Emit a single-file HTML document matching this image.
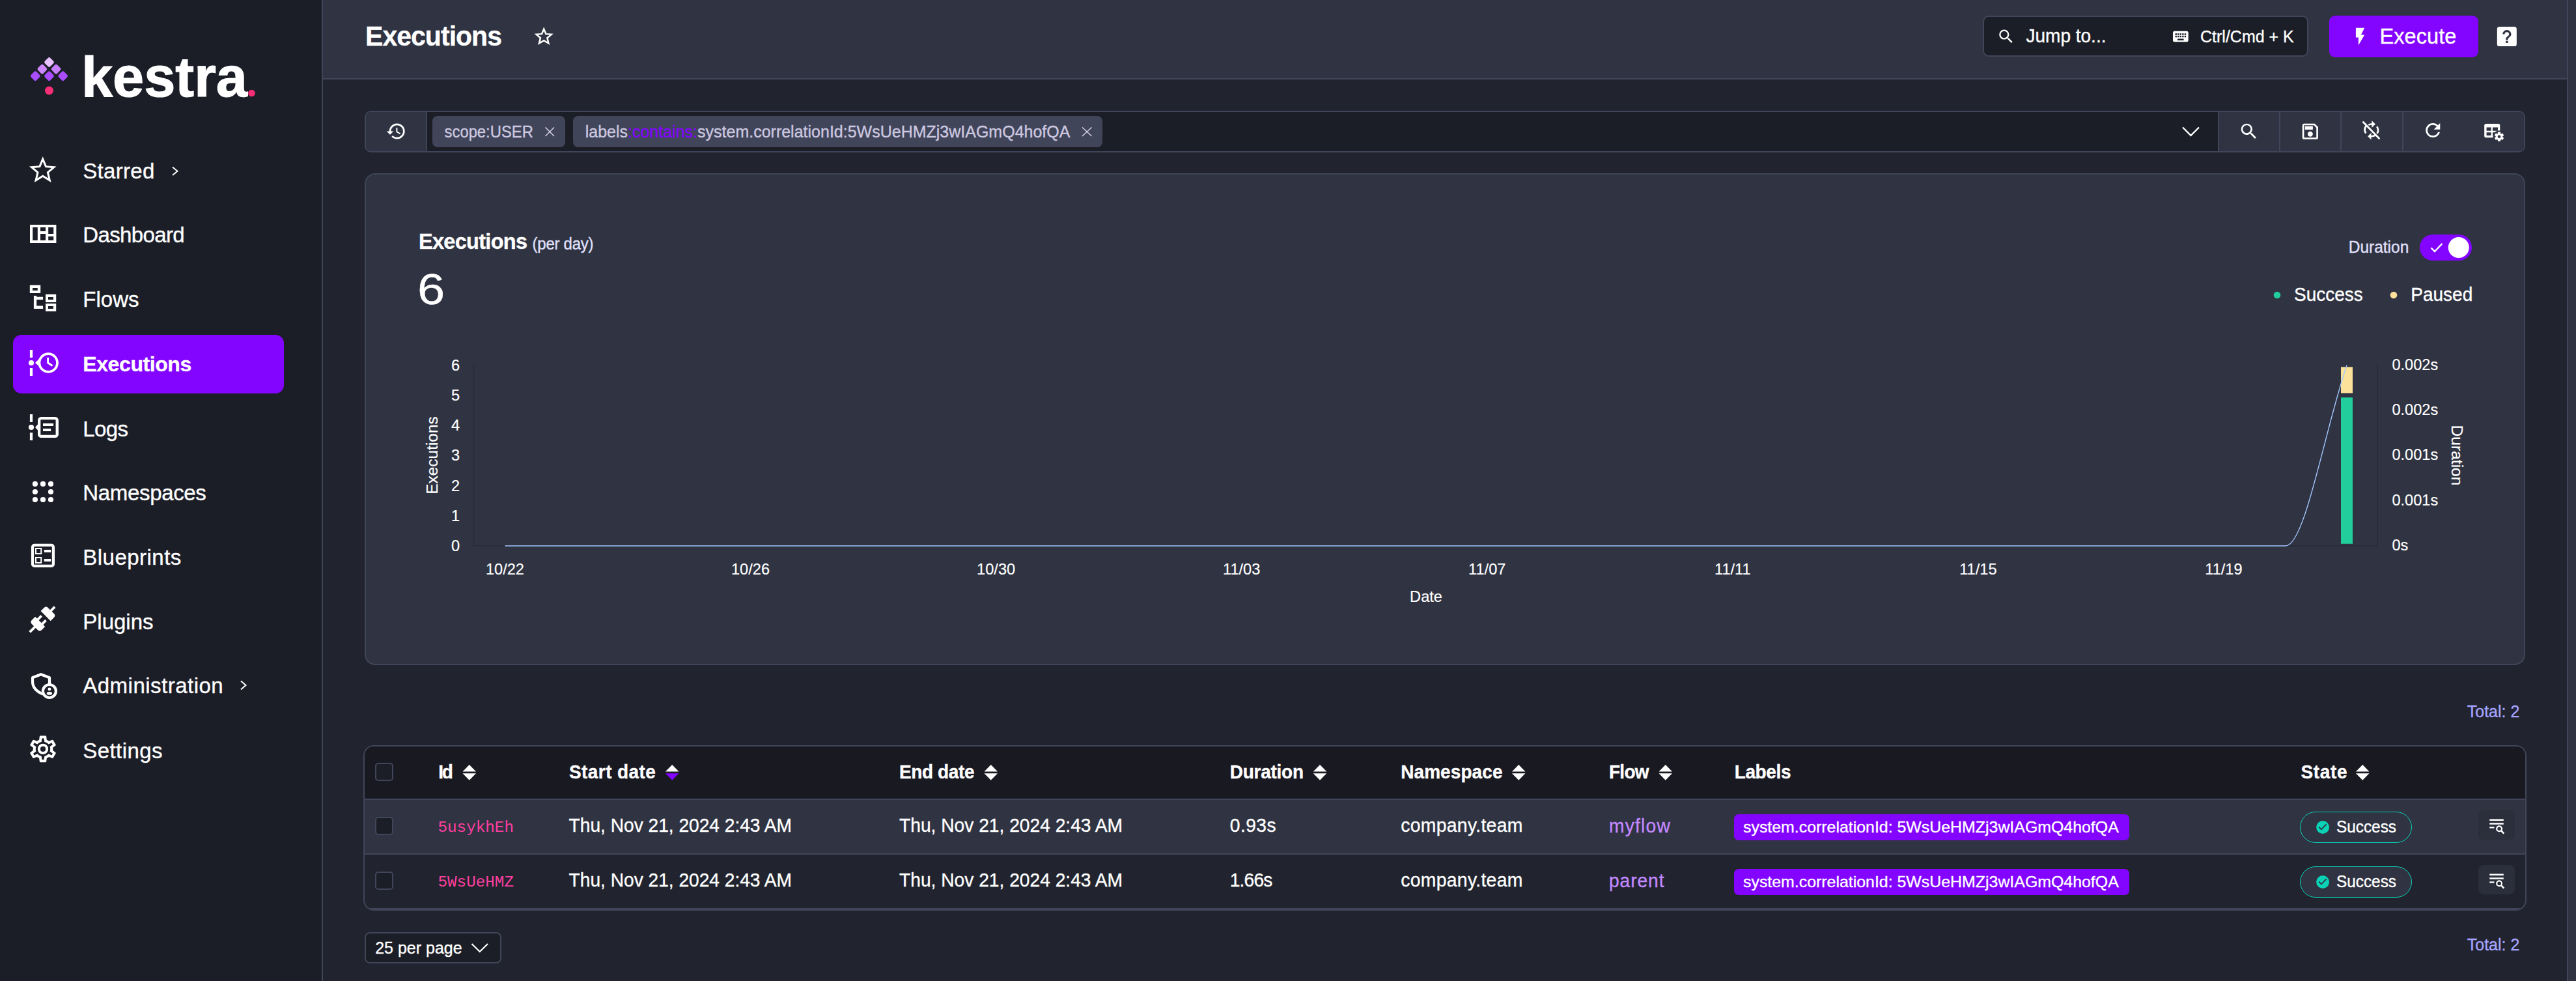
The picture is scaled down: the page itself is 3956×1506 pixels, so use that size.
<!DOCTYPE html>
<html><head><meta charset="utf-8"><style>
html,body{margin:0;padding:0;width:3956px;height:1506px;overflow:hidden;background:#21242e}
.t{position:absolute;white-space:pre;line-height:1;-webkit-text-stroke:0.35px currentColor}
.c{-webkit-text-stroke:0.2px currentColor}
.m{-webkit-text-stroke:0}
svg{overflow:visible}
</style></head><body>
<div style="position:absolute;left:0px;top:0px;width:494px;height:1506px;background:#1c1e27"></div>
<div style="position:absolute;left:494px;top:0px;width:2px;height:1506px;background:#404559"></div>
<div style="position:absolute;left:496px;top:0px;width:3446px;height:120px;background:#2f3342"></div>
<div style="position:absolute;left:496px;top:120px;width:3446px;height:2px;background:#404559"></div>
<div style="position:absolute;left:496px;top:122px;width:3446px;height:1384px;background:#21242e"></div>
<div style="position:absolute;left:3942px;top:0px;width:2px;height:1506px;background:#404559"></div>
<div style="position:absolute;left:3944px;top:0px;width:12px;height:1506px;background:#2f3342"></div>
<svg style="position:absolute;left:0px;top:0px;" width="494" height="200" viewBox="0 0 494 200"><rect x="69.6" y="89.6" width="11.8" height="11.8" rx="2.5" fill="#e9c1ff" transform="rotate(45 75.5 95.5)"/><rect x="59.00000000000001" y="100.19999999999999" width="11.8" height="11.8" rx="2.5" fill="#cd87ff" transform="rotate(45 64.9 106.1)"/><rect x="80.19999999999999" y="100.19999999999999" width="11.8" height="11.8" rx="2.5" fill="#c77dff" transform="rotate(45 86.1 106.1)"/><rect x="48.4" y="110.8" width="11.8" height="11.8" rx="2.5" fill="#a94dff" transform="rotate(45 54.3 116.7)"/><rect x="69.6" y="110.8" width="11.8" height="11.8" rx="2.5" fill="#a94dff" transform="rotate(45 75.5 116.7)"/><rect x="90.8" y="110.8" width="11.8" height="11.8" rx="2.5" fill="#a94dff" transform="rotate(45 96.7 116.7)"/><circle cx="75.5" cy="139" r="6.5" fill="#f62e76"/></svg>
<svg style="position:absolute;left:0;top:0" width="494" height="200" viewBox="0 0 494 200"><text x="125" y="147.5" font-family="Liberation Sans" font-weight="bold" font-size="88" fill="#fff" stroke="#fff" stroke-width="1.2" textLength="255" lengthAdjust="spacingAndGlyphs">kestra</text><circle cx="386.5" cy="143" r="5.3" fill="#f62e76"/></svg>
<div style="position:absolute;left:20px;top:514px;width:416px;height:90px;background:#8405ff;border-radius:13px"></div>
<div class="t " style="left:127.30px;top:245.95px;font:normal 33px/1 'Liberation Sans',sans-serif;color:#fff;letter-spacing:0.293px;">Starred</div>
<div class="t " style="left:127.30px;top:343.95px;font:normal 33px/1 'Liberation Sans',sans-serif;color:#fff;letter-spacing:-0.634px;">Dashboard</div>
<div class="t " style="left:127.30px;top:442.95px;font:normal 33px/1 'Liberation Sans',sans-serif;color:#fff;">Flows</div>
<div class="t " style="left:127.30px;top:542.80px;font:bold 32px/1 'Liberation Sans',sans-serif;color:#fff;letter-spacing:-0.413px;">Executions</div>
<div class="t " style="left:127.30px;top:641.95px;font:normal 33px/1 'Liberation Sans',sans-serif;color:#fff;letter-spacing:-0.637px;">Logs</div>
<div class="t " style="left:127.30px;top:739.95px;font:normal 33px/1 'Liberation Sans',sans-serif;color:#fff;letter-spacing:-0.339px;">Namespaces</div>
<div class="t " style="left:127.30px;top:838.95px;font:normal 33px/1 'Liberation Sans',sans-serif;color:#fff;letter-spacing:0.479px;">Blueprints</div>
<div class="t " style="left:127.30px;top:937.95px;font:normal 33px/1 'Liberation Sans',sans-serif;color:#fff;letter-spacing:-0.007px;">Plugins</div>
<div class="t " style="left:127.30px;top:1036.45px;font:normal 33px/1 'Liberation Sans',sans-serif;color:#fff;letter-spacing:0.48px;">Administration</div>
<div class="t " style="left:127.30px;top:1135.55px;font:normal 33px/1 'Liberation Sans',sans-serif;color:#fff;letter-spacing:0.415px;">Settings</div>
<svg style="position:absolute;left:0px;top:0px;" width="494" height="1506" viewBox="0 0 494 1506"><polyline points="265,256.5 272.5,262.75 265,269" fill="none" stroke="#fff" stroke-width="2"/><polyline points="370,1045.5 377.5,1052.0 370,1058.5" fill="none" stroke="#fff" stroke-width="2"/><polygon points="65.70,244.20 70.46,255.65 82.82,256.64 73.40,264.70 76.28,276.76 65.70,270.30 55.12,276.76 58.00,264.70 48.58,256.64 60.94,255.65" fill="none" stroke="#fff" stroke-width="3" stroke-miterlimit="3"/><path fill="#fff" fill-rule="evenodd" d="M46,345H86.4V373H46Z M50.2,349V369H57.8V349Z M62,349V355H70V349Z M62,359V369H70V359Z M74.2,349V359H82.2V349Z M74.2,363V369H82.2V363Z"/><path fill="#fff" fill-rule="evenodd" d="M45.8,437.8H62.2V450H45.8Z M50,442V446H57.8V442Z  M70,451.8H86.2V464H70Z M74,456V460H81.9V456Z M70,466.1H86.2V478H70Z M74,470V474H81.9V470Z M51.9,453.9H56.2V455.7H66.1V460H56.2V469.5H66.1V474H51.9Z"/><rect x="45.9" y="537" width="4.2" height="12" fill="#fff"/><rect x="45.9" y="565" width="4.2" height="12" fill="#fff"/><circle cx="48" cy="557" r="4.1" fill="#fff"/><path fill="#fff" d="M54,557L60.5,550.5L61.5,563.5Z"/><circle cx="74.2" cy="557" r="13.8" fill="none" stroke="#fff" stroke-width="3.8"/><path d="M73.6,549V557L80.5,561.5" fill="none" stroke="#fff" stroke-width="2.8"/><rect x="45.9" y="636" width="4.2" height="12" fill="#fff"/><rect x="45.9" y="664.2" width="4.2" height="11.8" fill="#fff"/><circle cx="48" cy="656" r="4.1" fill="#fff"/><path fill="#fff" d="M54,656L59,650.5L59,661.5Z"/><rect x="60.15" y="642.15" width="27.6" height="27.8" rx="3" fill="none" stroke="#fff" stroke-width="4.3"/><rect x="66" y="650" width="16" height="4" fill="#fff"/><rect x="66" y="658" width="12.1" height="4" fill="#fff"/><circle cx="53.9" cy="742.9" r="4.1" fill="#fff"/><circle cx="53.9" cy="755" r="4.1" fill="#fff"/><circle cx="53.9" cy="767" r="4.1" fill="#fff"/><circle cx="66" cy="742.9" r="4.1" fill="#fff"/><circle cx="66" cy="767" r="4.1" fill="#fff"/><circle cx="78" cy="742.9" r="4.1" fill="#fff"/><circle cx="78" cy="755" r="4.1" fill="#fff"/><circle cx="78" cy="767" r="4.1" fill="#fff"/><rect x="50" y="836.9" width="31.9" height="32" rx="3" fill="none" stroke="#fff" stroke-width="4.2"/><rect x="55" y="842" width="8.2" height="8" fill="none" stroke="#fff" stroke-width="2"/><rect x="55" y="856" width="8.2" height="8" fill="none" stroke="#fff" stroke-width="2"/><rect x="67.8" y="844" width="10.3" height="4" fill="#fff"/><rect x="67.8" y="858" width="10.3" height="4" fill="#fff"/><g transform="translate(41.6,927.8) scale(1.94)"><path fill="#fff" d="M21.4 7.5C22.2 8.3 22.2 9.6 21.4 10.3L18.6 13.1L10.8 5.3L13.6 2.5C14.4 1.7 15.7 1.7 16.4 2.5L18.2 4.3L21.2 1.3L22.6 2.7L19.6 5.7L21.4 7.5M15.6 13.3L14.2 11.9L11.4 14.7L9.3 12.6L12.1 9.8L10.7 8.4L7.9 11.2L6.4 9.8L3.6 12.6C2.8 13.4 2.8 14.7 3.6 15.4L5.4 17.2L1.4 21.2L2.8 22.6L6.8 18.6L8.6 20.4C9.4 21.2 10.7 21.2 11.4 20.4L14.2 17.6L12.8 16.2L15.6 13.3Z"/></g><path fill="none" stroke="#fff" stroke-width="4.2" stroke-linejoin="round" d="M65.8,1065.5C57,1062 50,1056 50,1046V1040.2L62.9,1035.2L76,1040.2V1050"/><circle cx="75.9" cy="1061" r="10" fill="none" stroke="#fff" stroke-width="4.2"/><circle cx="75.9" cy="1058" r="2.4" fill="#fff"/><ellipse cx="75.9" cy="1064.4" rx="4.2" ry="2.3" fill="#fff"/><g transform="translate(41.5,1125.4) scale(2.04)"><path fill="#fff" d="M12,8A4,4 0 0,1 16,12A4,4 0 0,1 12,16A4,4 0 0,1 8,12A4,4 0 0,1 12,8M12,10A2,2 0 0,0 10,12A2,2 0 0,0 12,14A2,2 0 0,0 14,12A2,2 0 0,0 12,10M10,22C9.75,22 9.54,21.82 9.5,21.58L9.13,18.93C8.5,18.68 7.96,18.34 7.44,17.94L4.95,18.95C4.73,19.03 4.46,18.95 4.34,18.73L2.34,15.27C2.21,15.05 2.27,14.78 2.46,14.63L4.57,12.97L4.5,12L4.57,11L2.46,9.37C2.27,9.22 2.21,8.95 2.34,8.73L4.34,5.27C4.46,5.05 4.73,4.96 4.95,5.05L7.44,6.05C7.96,5.66 8.5,5.32 9.13,5.07L9.5,2.42C9.54,2.18 9.75,2 10,2H14C14.25,2 14.46,2.18 14.5,2.42L14.87,5.07C15.5,5.32 16.04,5.66 16.56,6.05L19.05,5.05C19.27,4.96 19.54,5.05 19.66,5.27L21.66,8.73C21.79,8.95 21.73,9.22 21.54,9.37L19.43,11L19.5,12L19.43,13L21.54,14.63C21.73,14.78 21.79,15.05 21.66,15.27L19.66,18.73C19.54,18.95 19.27,19.04 19.05,18.95L16.56,17.95C16.04,18.34 15.5,18.68 14.87,18.93L14.5,21.58C14.46,21.82 14.25,22 14,22H10M11.25,4L10.88,6.61C9.68,6.86 8.62,7.5 7.85,8.39L5.44,7.35L4.69,8.65L6.8,10.2C6.4,11.37 6.4,12.64 6.8,13.8L4.68,15.36L5.43,16.66L7.86,15.62C8.63,16.5 9.68,17.14 10.87,17.38L11.24,20H12.76L13.13,17.39C14.32,17.14 15.37,16.5 16.14,15.62L18.57,16.66L19.32,15.36L17.2,13.81C17.6,12.64 17.6,11.37 17.2,10.2L19.31,8.65L18.56,7.35L16.15,8.39C15.38,7.5 14.32,6.86 13.12,6.62L12.75,4H11.25Z"/></g></svg>
<div class="t " style="left:561.00px;top:35.95px;font:bold 41px/1 'Liberation Sans',sans-serif;color:#fff;letter-spacing:-0.971px;transform:scaleY(1.03);transform-origin:0 34.85px;">Executions</div>
<svg style="position:absolute;left:0px;top:0px;" width="900" height="120" viewBox="0 0 900 120"><polygon points="835.20,44.40 838.43,52.15 846.80,52.83 840.43,58.30 842.37,66.47 835.20,62.10 828.03,66.47 829.97,58.30 823.60,52.83 831.97,52.15" fill="none" stroke="#fff" stroke-width="2.5" stroke-miterlimit="3"/></svg>
<div style="position:absolute;left:3045px;top:24px;width:500px;height:63px;background:#1c1e27;border:2px solid #404559;border-radius:9px;box-sizing:border-box"></div>
<div style="position:absolute;left:3577px;top:24px;width:229px;height:64px;background:#8405ff;border-radius:9px"></div>
<svg style="position:absolute;left:3000px;top:0px;" width="956" height="120" viewBox="3000 0 956 120"><g transform="translate(3066.7,41.9) scale(1.17)"><path fill="#fff" d="M9.5,3A6.5,6.5 0 0,1 16,9.5C16,11.11 15.41,12.59 14.44,13.73L14.71,14H15.5L20.5,19L19,20.5L14,15.5V14.71L13.73,14.44C12.59,15.41 11.11,16 9.5,16A6.5,6.5 0 0,1 3,9.5A6.5,6.5 0 0,1 9.5,3M9.5,5C7,5 5,7 5,9.5C5,12 7,14 9.5,14C12,14 14,12 14,9.5C14,7 12,5 9.5,5Z"/></g><g transform="translate(3334.6,41.8) scale(1.185)"><path fill="#fff" d="M19,10H17V8H19M19,13H17V11H19M16,10H14V8H16M16,13H14V11H16M16,17H8V15H16M7,10H5V8H7M7,13H5V11H7M8,11H10V13H8M8,8H10V10H8M11,11H13V13H11M11,8H13V10H11M20,5H4C2.89,5 2,5.89 2,7V17A2,2 0 0,0 4,19H20A2,2 0 0,0 22,17V7C22,5.89 21.1,5 20,5Z"/></g><g transform="translate(3608.6,40.2) scale(1.33)"><path fill="#fff" d="M7,2V13H10V22L17,10H13L17,2H7Z"/></g><g transform="translate(3829.8,35.9) scale(1.67)"><path fill="#fff" fill-rule="evenodd" d="M11,18H13V16H11V18M19,3H5C3.89,3 3,3.89 3,5V19A2,2 0 0,0 5,21H19A2,2 0 0,0 21,19V5C21,3.89 20.1,3 19,3M12,6A4,4 0 0,0 8,10H10A2,2 0 0,1 12,8A2,2 0 0,1 14,10C14,12 11,11.75 11,15H13C13,12.75 16,12.5 16,10A4,4 0 0,0 12,6Z"/></g></svg>
<div class="t " style="left:3111.50px;top:42.10px;font:normal 28px/1 'Liberation Sans',sans-serif;color:#fff;transform:scaleY(1.05);transform-origin:0 23.80px;">Jump to...</div>
<div class="t " style="left:3379.00px;top:43.95px;font:normal 25px/1 'Liberation Sans',sans-serif;color:#fff;transform:scaleY(1.05);transform-origin:0 21.25px;">Ctrl/Cmd + K</div>
<div class="t " style="left:3654.50px;top:39.88px;font:normal 32.5px/1 'Liberation Sans',sans-serif;color:#fff;letter-spacing:0.085px;transform:scaleY(1.05);transform-origin:0 27.62px;">Execute</div>
<div style="position:absolute;left:560px;top:170px;width:3318px;height:64px;box-sizing:border-box;border:2px solid #404559;border-radius:10px;background:#1c1e27;overflow:hidden"><div style="position:absolute;left:0;top:0;width:92px;height:60px;background:#2f3342"></div><div style="position:absolute;left:92px;top:0;width:2px;height:60px;background:#404559"></div><div style="position:absolute;left:2846px;top:0;width:470px;height:60px;background:#2f3342"></div><div style="position:absolute;left:2844px;top:0;width:2px;height:60px;background:#404559"></div><div style="position:absolute;left:2938px;top:0;width:2px;height:60px;background:#404559"></div><div style="position:absolute;left:3032px;top:0;width:2px;height:60px;background:#404559"></div><div style="position:absolute;left:3127px;top:0;width:2px;height:60px;background:#404559"></div></div>
<div style="position:absolute;left:664px;top:178px;width:204px;height:48px;background:#404559;border-radius:8px"></div>
<div style="position:absolute;left:880px;top:178px;width:813px;height:48px;background:#404559;border-radius:8px"></div>
<div class="t " style="left:682.60px;top:191.17px;font:normal 23.8px/1 'Liberation Sans',sans-serif;color:#cdc8e0;transform:scaleY(1.05);transform-origin:0 20.23px;">scope:USER</div>
<div class="t" style="left:898.70px;top:190.15px;font:25px/1 'Liberation Sans',sans-serif;color:#cdc8e0">labels<span style="color:#8405ff">:contains:</span>system.correlationId:5WsUeHMZj3wIAGmQ4hofQA</div>
<svg style="position:absolute;left:0px;top:160px;" width="3956" height="80" viewBox="0 160 3956 80"><path d="M837.5,195.5L851,209M851,195.5L837.5,209" stroke="#cdc8e0" stroke-width="1.7" fill="none"/><path d="M1662,195.5L1676.5,209M1676.5,195.5L1662,209" stroke="#cdc8e0" stroke-width="1.7" fill="none"/><g transform="translate(592.4,185.5) scale(1.33)"><path fill="#fff" d="M13.5,8H12V13L16.28,15.54L17,14.33L13.5,12.25V8M13,3A9,9 0 0,0 4,12H1L4.96,16.03L9,12H6A7,7 0 0,1 13,5A7,7 0 0,1 20,12A7,7 0 0,1 13,19C11.07,19 9.32,18.21 8.06,16.94L6.64,18.36C8.27,20 10.5,21 13,21A9,9 0 0,0 22,12A9,9 0 0,0 13,3"/></g><polyline points="3352,195.5 3364.5,208 3377,195.5" fill="none" stroke="#fff" stroke-width="2.4"/><g transform="translate(3437.7,185.7) scale(1.33)"><path fill="#fff" d="M9.5,3A6.5,6.5 0 0,1 16,9.5C16,11.11 15.41,12.59 14.44,13.73L14.71,14H15.5L20.5,19L19,20.5L14,15.5V14.71L13.73,14.44C12.59,15.41 11.11,16 9.5,16A6.5,6.5 0 0,1 3,9.5A6.5,6.5 0 0,1 9.5,3M9.5,5C7,5 5,7 5,9.5C5,12 7,14 9.5,14C12,14 14,12 14,9.5C14,7 12,5 9.5,5Z"/></g><g transform="translate(3531.7,185.6) scale(1.345)"><path fill="#fff" d="M17 3H5C3.89 3 3 3.9 3 5V19C3 20.1 3.89 21 5 21H19C20.1 21 21 20.1 21 19V7L17 3M19 19H5V5H16.17L19 7.83V19M12 12C10.34 12 9 13.34 9 15S10.34 18 12 18 15 16.66 15 15 13.66 12 12 12M6 6H15V10H6V6Z"/></g><path d="M3629.3,187.6L3653.6,212.6" stroke="#fff" stroke-width="2.8" stroke-linecap="round"/><polygon points="3642.3,185.3 3648,190.6 3642.3,195.9" fill="#fff"/><path d="M3637.3,192.2Q3639,190.4 3643,190.5" stroke="#fff" stroke-width="2.6" fill="none"/><path d="M3633.6,193.2A10.5,10.5 0 0,0 3633.2,204.6" stroke="#fff" stroke-width="2.8" fill="none"/><path d="M3650.3,194.3A10.5,10.5 0 0,1 3650.6,205" stroke="#fff" stroke-width="2.8" fill="none"/><polygon points="3641.5,204.1 3636.2,209.3 3641.5,214.5" fill="#fff"/><path d="M3641,209.3Q3645.5,209.3 3648.5,207.4" stroke="#fff" stroke-width="2.6" fill="none"/><g transform="translate(3719.7,183.5) scale(1.38)"><path fill="#fff" d="M17.65,6.35C16.2,4.9 14.21,4 12,4A8,8 0 0,0 4,12A8,8 0 0,0 12,20C15.73,20 18.84,17.45 19.73,14H17.65C16.83,16.33 14.61,18 12,18A6,6 0 0,1 6,12A6,6 0 0,1 12,6C13.66,6 15.14,6.69 16.22,7.78L13,11H20V4L17.65,6.35Z"/></g><path fill="#fff" fill-rule="evenodd" d="M3818,190H3836.5A2.8,2.8 0 0,1 3839.3,192.8V208.4A2.8,2.8 0 0,1 3836.5,211.2H3818A2.8,2.8 0 0,1 3815.2,208.4V192.8A2.8,2.8 0 0,1 3818,190Z M3818.6,195.6V200.8H3825.6V195.6Z M3828,195.6V200.8H3836V195.6Z M3818.6,203.2V208H3825.6V203.2Z M3828,203.2V208H3836V203.2Z"/><circle cx="3838" cy="209.8" r="9.5" fill="#2f3342"/><g transform="translate(3838,209.8)"><rect x="-2.1" y="-7.2" width="4.2" height="14.4" rx="0.8" fill="#fff" transform="rotate(0)"/><rect x="-2.1" y="-7.2" width="4.2" height="14.4" rx="0.8" fill="#fff" transform="rotate(60)"/><rect x="-2.1" y="-7.2" width="4.2" height="14.4" rx="0.8" fill="#fff" transform="rotate(120)"/><circle r="5.4" fill="#fff"/><circle r="2.3" fill="#2f3342"/></g></svg>
<div style="position:absolute;left:560px;top:266px;width:3318px;height:755px;background:#2f3342;border:2px solid #404559;border-radius:16px;box-sizing:border-box"></div>
<div class="t " style="left:643.00px;top:355.38px;font:bold 32.5px/1 'Liberation Sans',sans-serif;color:#fff;letter-spacing:-0.71px;transform:scaleY(1.05);transform-origin:0 27.62px;">Executions</div>
<div class="t " style="left:817.60px;top:362.60px;font:normal 24px/1 'Liberation Sans',sans-serif;color:#e0e0fc;letter-spacing:-0.275px;transform:scaleY(1.05);transform-origin:0 20.40px;">(per day)</div>
<div class="t " style="left:640.50px;top:410.50px;font:normal 66px/1 'Liberation Sans',sans-serif;color:#fff;transform:scaleX(1.15);transform-origin:0 0;">6</div>
<div class="t " style="left:3606.70px;top:368.07px;font:normal 24.5px/1 'Liberation Sans',sans-serif;color:#e0e0fc;transform:scaleY(1.05);transform-origin:0 20.82px;">Duration</div>
<div style="position:absolute;left:3716px;top:360px;width:80px;height:40px;background:#8405ff;border-radius:20px"></div>
<svg style="position:absolute;left:560px;top:266px;" width="3318" height="755" viewBox="560 266 3318 755"><circle cx="3775.8" cy="380" r="16" fill="#fff"/><polyline points="3733.5,380.5 3739,386 3750.5,374" fill="none" stroke="#fff" stroke-width="2.4"/><circle cx="3497" cy="453" r="5.3" fill="#21ce9c"/><circle cx="3676" cy="453" r="5.3" fill="#fbe199"/><path d="M727.5,559.5V838M3651,559.5V838M727.5,838H3651" stroke="#292c39" stroke-width="2" fill="none"/><rect x="3595" y="610.2" width="18" height="224.6" fill="#21ce9c"/><rect x="3595" y="563.4" width="18" height="40.1" fill="#fbe199"/><path d="M775.5,838H3510C3540,838 3570,660 3604,560.7" fill="none" stroke="#a4c8ff" stroke-width="1.4"/></svg>
<div class="t " style="left:3523.00px;top:439.00px;font:normal 28px/1 'Liberation Sans',sans-serif;color:#fff;transform:scaleY(1.05);transform-origin:0 23.80px;">Success</div>
<div class="t " style="left:3702.30px;top:439.00px;font:normal 28px/1 'Liberation Sans',sans-serif;color:#fff;transform:scaleY(1.05);transform-origin:0 23.80px;">Paused</div>
<div class="t c" style="left:692.90px;top:827.14px;font:normal 23.6px/1 'Liberation Sans',sans-serif;color:#fff;">0</div>
<div class="t c" style="left:692.90px;top:780.89px;font:normal 23.6px/1 'Liberation Sans',sans-serif;color:#fff;">1</div>
<div class="t c" style="left:692.90px;top:734.64px;font:normal 23.6px/1 'Liberation Sans',sans-serif;color:#fff;">2</div>
<div class="t c" style="left:692.90px;top:688.39px;font:normal 23.6px/1 'Liberation Sans',sans-serif;color:#fff;">3</div>
<div class="t c" style="left:692.90px;top:642.14px;font:normal 23.6px/1 'Liberation Sans',sans-serif;color:#fff;">4</div>
<div class="t c" style="left:692.90px;top:595.89px;font:normal 23.6px/1 'Liberation Sans',sans-serif;color:#fff;">5</div>
<div class="t c" style="left:692.90px;top:549.64px;font:normal 23.6px/1 'Liberation Sans',sans-serif;color:#fff;">6</div>
<div class="t c" style="left:3673.40px;top:825.84px;font:normal 23.6px/1 'Liberation Sans',sans-serif;color:#fff;">0s</div>
<div class="t c" style="left:3673.40px;top:756.59px;font:normal 23.6px/1 'Liberation Sans',sans-serif;color:#fff;">0.001s</div>
<div class="t c" style="left:3673.40px;top:687.34px;font:normal 23.6px/1 'Liberation Sans',sans-serif;color:#fff;">0.001s</div>
<div class="t c" style="left:3673.40px;top:618.09px;font:normal 23.6px/1 'Liberation Sans',sans-serif;color:#fff;">0.002s</div>
<div class="t c" style="left:3673.40px;top:548.84px;font:normal 23.6px/1 'Liberation Sans',sans-serif;color:#fff;">0.002s</div>
<div class="t c" style="left:745.94px;top:862.64px;font:normal 23.6px/1 'Liberation Sans',sans-serif;color:#fff;">10/22</div>
<div class="t c" style="left:1123.01px;top:862.64px;font:normal 23.6px/1 'Liberation Sans',sans-serif;color:#fff;">10/26</div>
<div class="t c" style="left:1500.08px;top:862.64px;font:normal 23.6px/1 'Liberation Sans',sans-serif;color:#fff;">10/30</div>
<div class="t c" style="left:1878.04px;top:862.64px;font:normal 23.6px/1 'Liberation Sans',sans-serif;color:#fff;">11/03</div>
<div class="t c" style="left:2255.11px;top:862.64px;font:normal 23.6px/1 'Liberation Sans',sans-serif;color:#fff;">11/07</div>
<div class="t c" style="left:2633.06px;top:862.64px;font:normal 23.6px/1 'Liberation Sans',sans-serif;color:#fff;">11/11</div>
<div class="t c" style="left:3009.25px;top:862.64px;font:normal 23.6px/1 'Liberation Sans',sans-serif;color:#fff;">11/15</div>
<div class="t c" style="left:3386.32px;top:862.64px;font:normal 23.6px/1 'Liberation Sans',sans-serif;color:#fff;">11/19</div>
<div class="t c" style="left:2165.10px;top:905.14px;font:normal 23.6px/1 'Liberation Sans',sans-serif;color:#fff;">Date</div>
<div class="t c" style="left:663.7px;top:698.7px;font:24.4px 'Liberation Sans',sans-serif;color:#fff;transform:translate(-50%,-50%) rotate(-90deg);line-height:1">Executions</div>
<div class="t c" style="left:3772.5px;top:699px;font:24.6px 'Liberation Sans',sans-serif;color:#fff;transform:translate(-50%,-50%) rotate(90deg);line-height:1">Duration</div>
<div class="t " style="left:3788.78px;top:1080.05px;font:normal 25px/1 'Liberation Sans',sans-serif;color:#a6a3ff;transform:scaleY(1.05);transform-origin:0 21.25px;">Total: 2</div>
<div class="t " style="left:3788.78px;top:1437.95px;font:normal 25px/1 'Liberation Sans',sans-serif;color:#a6a3ff;transform:scaleY(1.05);transform-origin:0 21.25px;">Total: 2</div>
<div style="position:absolute;left:558px;top:1144px;width:3322px;height:254px;box-sizing:border-box;border:2px solid #404559;border-radius:16px;overflow:hidden;background:#21242e"><div style="position:absolute;left:0;top:0;width:3318px;height:80px;background:#191922"></div><div style="position:absolute;left:0;top:80px;width:3318px;height:2px;background:#404559"></div><div style="position:absolute;left:0;top:82px;width:3318px;height:82px;background:#2f3342"></div><div style="position:absolute;left:0;top:164px;width:3318px;height:2px;background:#404559"></div><div style="position:absolute;left:0;top:248px;width:3318px;height:2px;background:#404559"></div></div>
<div style="position:absolute;left:576px;top:1171px;width:28px;height:28px;background:#1c1e27;border:2px solid #404559;border-radius:5px;box-sizing:border-box"></div>
<div style="position:absolute;left:576px;top:1253.5px;width:28px;height:28.0px;background:#1c1e27;border:2px solid #404559;border-radius:5px;box-sizing:border-box"></div>
<div style="position:absolute;left:576px;top:1337.5px;width:28px;height:28.0px;background:#1c1e27;border:2px solid #404559;border-radius:5px;box-sizing:border-box"></div>
<div class="t " style="left:673.20px;top:1171.50px;font:bold 28px/1 'Liberation Sans',sans-serif;color:#fff;letter-spacing:-2.12px;transform:scaleY(1.05);transform-origin:0 23.80px;">Id</div>
<div class="t " style="left:874.00px;top:1171.50px;font:bold 28px/1 'Liberation Sans',sans-serif;color:#fff;letter-spacing:0.42px;transform:scaleY(1.05);transform-origin:0 23.80px;">Start date</div>
<div class="t " style="left:1381.00px;top:1171.50px;font:bold 28px/1 'Liberation Sans',sans-serif;color:#fff;letter-spacing:-0.386px;transform:scaleY(1.05);transform-origin:0 23.80px;">End date</div>
<div class="t " style="left:1888.80px;top:1171.50px;font:bold 28px/1 'Liberation Sans',sans-serif;color:#fff;letter-spacing:-0.269px;transform:scaleY(1.05);transform-origin:0 23.80px;">Duration</div>
<div class="t " style="left:2151.20px;top:1171.50px;font:bold 28px/1 'Liberation Sans',sans-serif;color:#fff;letter-spacing:0.078px;transform:scaleY(1.05);transform-origin:0 23.80px;">Namespace</div>
<div class="t " style="left:2471.00px;top:1171.50px;font:bold 28px/1 'Liberation Sans',sans-serif;color:#fff;letter-spacing:-0.747px;transform:scaleY(1.05);transform-origin:0 23.80px;">Flow</div>
<div class="t " style="left:2663.70px;top:1171.50px;font:bold 28px/1 'Liberation Sans',sans-serif;color:#fff;letter-spacing:-0.372px;transform:scaleY(1.05);transform-origin:0 23.80px;">Labels</div>
<div class="t " style="left:3533.50px;top:1171.50px;font:bold 28px/1 'Liberation Sans',sans-serif;color:#fff;letter-spacing:0.66px;transform:scaleY(1.05);transform-origin:0 23.80px;">State</div>
<svg style="position:absolute;left:0px;top:1140px;" width="3956" height="70" viewBox="0 1140 3956 70"><path d="M710.5,1184.5L720.75,1174L731.0,1184.5Z" fill="#fff"/><path d="M710.5,1187.2L720.75,1197.7L731.0,1187.2Z" fill="#fff"/><path d="M1022,1184.5L1032.25,1174L1042.5,1184.5Z" fill="#fff"/><path d="M1022,1187.2L1032.25,1197.7L1042.5,1187.2Z" fill="#8405ff"/><path d="M1511.5,1184.5L1521.75,1174L1532.0,1184.5Z" fill="#fff"/><path d="M1511.5,1187.2L1521.75,1197.7L1532.0,1187.2Z" fill="#fff"/><path d="M2016.8,1184.5L2027.05,1174L2037.3,1184.5Z" fill="#fff"/><path d="M2016.8,1187.2L2027.05,1197.7L2037.3,1187.2Z" fill="#fff"/><path d="M2322,1184.5L2332.25,1174L2342.5,1184.5Z" fill="#fff"/><path d="M2322,1187.2L2332.25,1197.7L2342.5,1187.2Z" fill="#fff"/><path d="M2547.5,1184.5L2557.75,1174L2568.0,1184.5Z" fill="#fff"/><path d="M2547.5,1187.2L2557.75,1197.7L2568.0,1187.2Z" fill="#fff"/><path d="M3618,1184.5L3628.25,1174L3638.5,1184.5Z" fill="#fff"/><path d="M3618,1187.2L3628.25,1197.7L3638.5,1187.2Z" fill="#fff"/></svg>
<div class="t m" style="left:672.40px;top:1258.73px;font:normal 24.3px/1 'Liberation Mono',monospace;color:#ff3ea0;">5usykhEh</div>
<div class="t " style="left:873.60px;top:1253.23px;font:normal 28.2px/1 'Liberation Sans',sans-serif;color:#fff;letter-spacing:-0.031px;transform:scaleY(1.05);transform-origin:0 23.97px;">Thu, Nov 21, 2024 2:43 AM</div>
<div class="t " style="left:1381.00px;top:1253.23px;font:normal 28.2px/1 'Liberation Sans',sans-serif;color:#fff;letter-spacing:-0.006px;transform:scaleY(1.05);transform-origin:0 23.97px;">Thu, Nov 21, 2024 2:43 AM</div>
<div class="t " style="left:1888.80px;top:1253.23px;font:normal 28.2px/1 'Liberation Sans',sans-serif;color:#fff;letter-spacing:0.463px;transform:scaleY(1.05);transform-origin:0 23.97px;">0.93s</div>
<div class="t " style="left:2151.20px;top:1253.06px;font:normal 28.4px/1 'Liberation Sans',sans-serif;color:#fff;letter-spacing:0.284px;transform:scaleY(1.05);transform-origin:0 24.14px;">company.team</div>
<div class="t " style="left:2471.00px;top:1253.83px;font:normal 28.2px/1 'Liberation Sans',sans-serif;color:#c388ff;letter-spacing:1.231px;transform:scaleY(1.05);transform-origin:0 23.97px;">myflow</div>
<div style="position:absolute;left:2663px;top:1250.2px;width:607px;height:40.0px;background:#8405ff;border-radius:7px"></div>
<div class="t " style="left:2677.00px;top:1257.24px;font:normal 24.9px/1 'Liberation Sans',sans-serif;color:#fff;letter-spacing:-0.001px;transform:scaleY(0.96);transform-origin:0 21.16px;">system.correlationId: 5WsUeHMZj3wIAGmQ4hofQA</div>
<div style="position:absolute;left:3532px;top:1246px;width:172px;height:48px;background:#2f3342;border:1.4px solid #0ad2b5;border-radius:24px;box-sizing:border-box"></div>
<div class="t " style="left:3587.90px;top:1258.26px;font:normal 24.4px/1 'Liberation Sans',sans-serif;color:#fff;transform:scaleY(1.05);transform-origin:0 20.74px;">Success</div>
<div style="position:absolute;left:3806px;top:1244.2px;width:56px;height:45.09999999999991px;background:#2b2e3b;border-radius:8px"></div>
<div class="t m" style="left:672.40px;top:1342.93px;font:normal 24.3px/1 'Liberation Mono',monospace;color:#ff3ea0;">5WsUeHMZ</div>
<div class="t " style="left:873.60px;top:1337.43px;font:normal 28.2px/1 'Liberation Sans',sans-serif;color:#fff;letter-spacing:-0.031px;transform:scaleY(1.05);transform-origin:0 23.97px;">Thu, Nov 21, 2024 2:43 AM</div>
<div class="t " style="left:1381.00px;top:1337.43px;font:normal 28.2px/1 'Liberation Sans',sans-serif;color:#fff;letter-spacing:-0.006px;transform:scaleY(1.05);transform-origin:0 23.97px;">Thu, Nov 21, 2024 2:43 AM</div>
<div class="t " style="left:1888.80px;top:1337.43px;font:normal 28.2px/1 'Liberation Sans',sans-serif;color:#fff;letter-spacing:-0.862px;transform:scaleY(1.05);transform-origin:0 23.97px;">1.66s</div>
<div class="t " style="left:2151.20px;top:1337.26px;font:normal 28.4px/1 'Liberation Sans',sans-serif;color:#fff;letter-spacing:0.284px;transform:scaleY(1.05);transform-origin:0 24.14px;">company.team</div>
<div class="t " style="left:2471.00px;top:1338.03px;font:normal 28.2px/1 'Liberation Sans',sans-serif;color:#c388ff;letter-spacing:0.911px;transform:scaleY(1.05);transform-origin:0 23.97px;">parent</div>
<div style="position:absolute;left:2663px;top:1334px;width:607px;height:40px;background:#8405ff;border-radius:7px"></div>
<div class="t " style="left:2677.00px;top:1341.04px;font:normal 24.9px/1 'Liberation Sans',sans-serif;color:#fff;letter-spacing:-0.001px;transform:scaleY(0.96);transform-origin:0 21.16px;">system.correlationId: 5WsUeHMZj3wIAGmQ4hofQA</div>
<div style="position:absolute;left:3532px;top:1330px;width:172px;height:48px;background:#2f3342;border:1.4px solid #0ad2b5;border-radius:24px;box-sizing:border-box"></div>
<div class="t " style="left:3587.90px;top:1342.26px;font:normal 24.4px/1 'Liberation Sans',sans-serif;color:#fff;transform:scaleY(1.05);transform-origin:0 20.74px;">Success</div>
<div style="position:absolute;left:3806px;top:1328.2px;width:56px;height:45.09999999999991px;background:#2b2e3b;border-radius:8px"></div>
<svg style="position:absolute;left:0px;top:1200px;" width="3956" height="200" viewBox="0 1200 3956 200"><circle cx="3567.1" cy="1270" r="10" fill="#0ad2b5"/><polyline points="3561.2,1269.5 3565,1273.3 3572.6,1265.3" fill="none" stroke="#2f3342" stroke-width="1.8"/><path d="M3823.3,1258.8H3844.8M3823.3,1264.5H3844.8M3823.3,1270.4H3830.5" stroke="#fff" stroke-width="2.4"/><circle cx="3838.1" cy="1272.2" r="3.9" fill="none" stroke="#2f3342" stroke-width="5"/><circle cx="3838.1" cy="1272.2" r="3.9" fill="none" stroke="#fff" stroke-width="2.2"/><path d="M3841,1275.2L3845.3,1279.6" stroke="#fff" stroke-width="2.6"/><circle cx="3567.1" cy="1354" r="10" fill="#0ad2b5"/><polyline points="3561.2,1353.5 3565,1357.3 3572.6,1349.3" fill="none" stroke="#2f3342" stroke-width="1.8"/><path d="M3823.3,1342.8H3844.8M3823.3,1348.5H3844.8M3823.3,1354.4H3830.5" stroke="#fff" stroke-width="2.4"/><circle cx="3838.1" cy="1356.2" r="3.9" fill="none" stroke="#21242e" stroke-width="5"/><circle cx="3838.1" cy="1356.2" r="3.9" fill="none" stroke="#fff" stroke-width="2.2"/><path d="M3841,1359.2L3845.3,1363.6" stroke="#fff" stroke-width="2.6"/></svg>
<div style="position:absolute;left:560px;top:1431px;width:210px;height:48px;background:#1c1e27;border:2px solid #404559;border-radius:8px;box-sizing:border-box"></div>
<div class="t " style="left:576.20px;top:1443.05px;font:normal 25px/1 'Liberation Sans',sans-serif;color:#fff;transform:scaleY(1.05);transform-origin:0 21.25px;">25 per page</div>
<svg style="position:absolute;left:700px;top:1440px;" width="80" height="30" viewBox="700 1440 80 30"><polyline points="724.5,1449 736.8,1461 749,1449" fill="none" stroke="#fff" stroke-width="2.2"/></svg>
</body></html>
